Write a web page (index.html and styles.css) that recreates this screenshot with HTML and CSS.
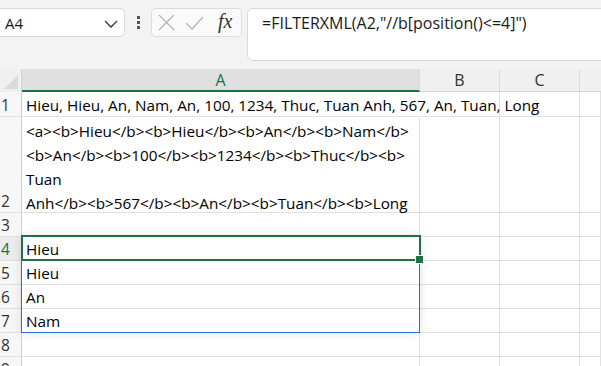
FILE: index.html
```html
<!DOCTYPE html>
<html>
<head>
<meta charset="utf-8">
<link rel="stylesheet" href="styles.css">
</head>
<body>
<div class="app">
  <div class="toolbar">
    <div class="namebox">
      <span class="name">A4</span>
      <svg class="chev" width="14" height="8" viewBox="0 0 14 8"><polyline points="1,1 7,7 13,1" fill="none" stroke="#333" stroke-width="1.3"/></svg>
    </div>
    <div class="dots"><span></span><span></span><span></span></div>
    <div class="fxbox">
      <svg width="17" height="17" viewBox="0 0 17 17"><path d="M1 1 L16 16 M16 1 L1 16" stroke="#b5b5b5" stroke-width="1.3" fill="none"/></svg>
      <svg width="19" height="14" viewBox="0 0 19 14"><polyline points="1,7 7,13 18,1" stroke="#b5b5b5" stroke-width="1.3" fill="none"/></svg>
      <span class="fx">fx</span>
    </div>
    <div class="formula">=FILTERXML(A2,"//b[position()&lt;=4]")</div>
  </div>
  <div class="sheet">
    <div class="corner"><span class="tri"></span></div>
    <div class="ch sel">A</div>
    <div class="ch">B</div>
    <div class="ch">C</div>
    <div class="ch last"></div>

    <div class="rh">1</div>
    <div class="c over">Hieu, Hieu, An, Nam, An, 100, 1234, Thuc, Tuan Anh, 567, An, Tuan, Long</div>
    <div class="c"></div><div class="c"></div><div class="c"></div>

    <div class="rh tall">2</div>
    <div class="c wrap">&lt;a&gt;&lt;b&gt;Hieu&lt;/b&gt;&lt;b&gt;Hieu&lt;/b&gt;&lt;b&gt;An&lt;/b&gt;&lt;b&gt;Nam&lt;/b&gt;<br>&lt;b&gt;An&lt;/b&gt;&lt;b&gt;100&lt;/b&gt;&lt;b&gt;1234&lt;/b&gt;&lt;b&gt;Thuc&lt;/b&gt;&lt;b&gt;<br>Tuan<br>Anh&lt;/b&gt;&lt;b&gt;567&lt;/b&gt;&lt;b&gt;An&lt;/b&gt;&lt;b&gt;Tuan&lt;/b&gt;&lt;b&gt;Long</div>
    <div class="c"></div><div class="c"></div><div class="c"></div>

    <div class="rh">3</div>
    <div class="c"></div><div class="c"></div><div class="c"></div><div class="c"></div>

    <div class="rh rsel">4</div>
    <div class="c">Hieu</div><div class="c"></div><div class="c"></div><div class="c"></div>

    <div class="rh">5</div>
    <div class="c">Hieu</div><div class="c"></div><div class="c"></div><div class="c"></div>

    <div class="rh">6</div>
    <div class="c">An</div><div class="c"></div><div class="c"></div><div class="c"></div>

    <div class="rh">7</div>
    <div class="c">Nam</div><div class="c"></div><div class="c"></div><div class="c"></div>

    <div class="rh">8</div>
    <div class="c"></div><div class="c"></div><div class="c"></div><div class="c"></div>

    <div class="rh">9</div>
    <div class="c"></div><div class="c"></div><div class="c"></div><div class="c"></div>

    <div class="spill"></div>
    <div class="active"><span class="handle"></span></div>
  </div>
</div>
</body>
</html>
```

FILE: styles.css
```css
* { box-sizing: border-box; }
html, body { margin: 0; padding: 0; }
body {
  width: 601px;
  height: 366px;
  overflow: hidden;
  background: #ffffff;
  font-family: "Open Sans", "Noto Sans", sans-serif;
  color: #000;
}
.app { width: 601px; height: 366px; overflow: hidden; }
.toolbar {
  height: 69px;
  background: #f3f3f3;
  display: flex;
  align-items: flex-start;
  padding-top: 8px;
}
.namebox {
  width: 131px;
  height: 29px;
  margin-left: -6px;
  flex: none;
  background: #fff;
  border: 1px solid #d9d9d9;
  border-radius: 5px;
  display: flex;
  align-items: center;
  justify-content: space-between;
  padding: 0 6px 0 10px;
}
.name { font-size: 15px; color: #1a1a1a; }
.chev { margin-top: 2px; }
.dots {
  width: 26px;
  flex: none;
  height: 29px;
  display: flex;
  flex-direction: column;
  align-items: center;
  justify-content: center;
  gap: 2px;
}
.dots span { width: 3px; height: 3px; background: #555; }
.fxbox {
  width: 91px;
  flex: none;
  height: 29px;
  background: #fafafa;
  border: 1px solid #dcdcdc;
  border-radius: 5px;
  display: flex;
  align-items: center;
  padding-left: 6px;
  gap: 10px;
}
.fx {
  font-family: "Liberation Serif", serif;
  font-style: italic;
  font-size: 20px;
  color: #333;
  margin-left: 4px;
  margin-top: -3px;
}
.formula {
  margin-left: 5px;
  flex: 1;
  height: 53px;
  margin-right: -10px;
  background: #fff;
  border: 1px solid #d9d9d9;
  border-radius: 6px;
  font-size: 16px;
  color: #1a1a1a;
  padding: 3px 0 0 14px;
}
.sheet {
  position: relative;
  display: grid;
  grid-template-columns: 22px 398px 80px 80px 1fr;
  grid-template-rows: 23px 25px 96px 24px 24px 24px 24px 24px 24px 24px;
  font-size: 15.3px;
}
.corner {
  position: relative;
  background: #f0f0f0;
  border-right: 1px solid #d4d4d4;
}
.tri {
  position: absolute;
  right: 3px;
  bottom: 3px;
  width: 0; height: 0;
  border-left: 14px solid transparent;
  border-bottom: 14px solid #dadada;
}
.ch {
  background: #f0f0f0;
  border-right: 1px solid #dadada;
  border-bottom: 1px solid #d4d4d4;
  display: flex;
  align-items: center;
  justify-content: center;
  font-size: 16px;
  color: #333;
}
.ch.sel {
  background: #e0e0e0;
  color: #1e7145;
  border-bottom: 2px solid #1e7145;
}
.ch.last { border-right: none; }
.rh {
  background: #f7f7f7;
  border-right: 1px solid #cfcfcf;
  border-bottom: 1px solid #e0e0e0;
  font-size: 15.5px;
  color: #333;
  display: flex;
  align-items: flex-end;
  padding: 0 0 0 1px;
  line-height: 21px;
}
.rh.rsel { color: #1e7145; background: #ececec; }
.c {
  border-right: 1px solid #e1e1e1;
  border-bottom: 1px solid #e1e1e1;
  padding: 0 0 0 4px;
  display: flex;
  align-items: flex-end;
  line-height: 22px;
  white-space: nowrap;
}
.c.over { overflow: visible; position: relative; z-index: 1; border-right-color: transparent; }
.c.wrap { display: block; padding-top: 2px; line-height: 24px; }
.spill {
  position: absolute;
  left: 21px;
  top: 167px;
  width: 399px;
  height: 97px;
  border: 1px solid #2a6bd3;
  border-top: none;
  box-shadow: 0 0 10px rgba(0,0,0,0.12);
  pointer-events: none;
}
.active {
  position: absolute;
  left: 21px;
  top: 166px;
  width: 400px;
  height: 26px;
  border: 2px solid #1e7145;
}
.handle {
  position: absolute;
  right: -5px;
  bottom: -5px;
  width: 7px;
  height: 7px;
  background: #1e7145;
  border: 1px solid #fff;
  box-sizing: content-box;
}
```
